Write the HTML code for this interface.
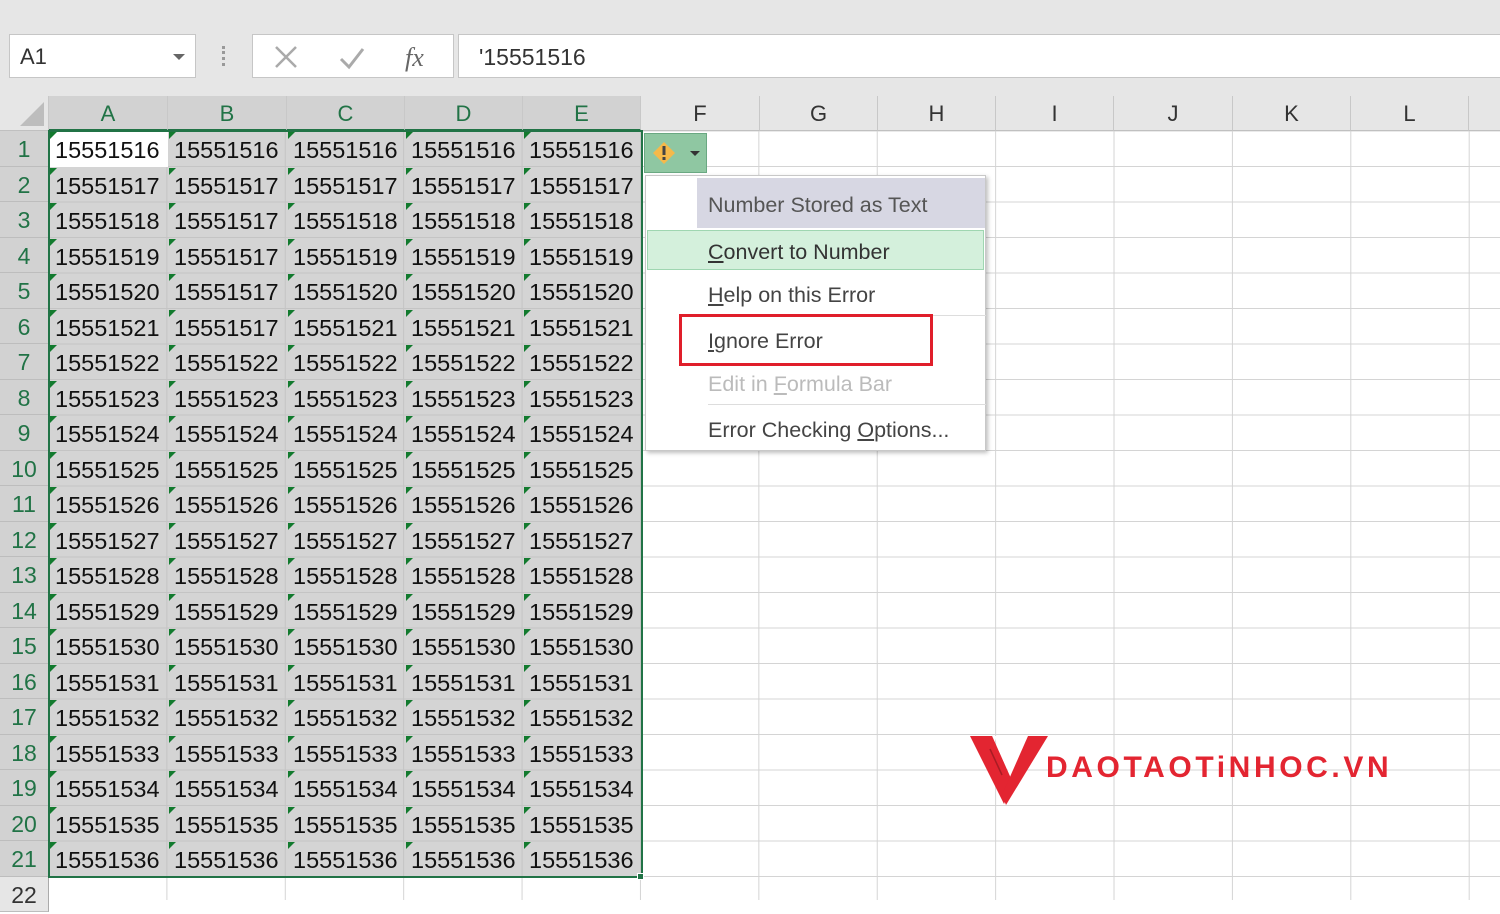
<!DOCTYPE html>
<html><head><meta charset="utf-8"><style>
*{margin:0;padding:0;box-sizing:border-box}
body{width:1500px;height:900px;overflow:hidden;background:#fff;font-family:"Liberation Sans",sans-serif;position:relative}
.top{position:absolute;left:0;top:0;width:1500px;height:96px;background:#e6e6e6}
.box{position:absolute;background:#fff;border:1px solid #c6c6c6}
.colh{position:absolute;top:96px;height:35px;background:#e6e6e6;border-right:1px solid #c8c8c8;border-bottom:1px solid #c0c0c0;text-align:center;font-size:22px;line-height:36px;color:#333}
.colh.s{background:#d2d2d2;color:#217346;border-bottom:2px solid #217346}
.rowh{position:absolute;left:0;width:49px;background:#d2d2d2;color:#217346;border-bottom:1px solid #bdbdbd;text-align:center;font-size:23px;line-height:37px;border-right:1px solid #aaa}
.grid{position:absolute;left:49px;top:131px;width:1451px;height:769px;
background-image:linear-gradient(to right,#d4d4d4 1px,transparent 1px),linear-gradient(to bottom,#d4d4d4 1px,transparent 1px);
background-size:118.4px 35.5px;background-position:-1px 35px}
.sel{position:absolute;left:49px;top:131px;width:592px;height:746px;background:#d4d4d4;
background-image:linear-gradient(to right,#c4c4c4 1px,transparent 1px),linear-gradient(to bottom,#c4c4c4 1px,transparent 1px);
background-size:118.4px 35.5px;background-position:-1px 35px}
.r{position:absolute;left:49px;height:35.5px;width:592px;font-size:23.5px;color:#111;line-height:39px}
.r span{position:absolute;top:0;padding-left:6px}
.r span:before{content:"";position:absolute;left:1px;top:1px;border-top:7px solid #127a2e;border-right:7px solid transparent}
.r span:nth-child(1){left:0}.r span:nth-child(2){left:119px}.r span:nth-child(3){left:238px}.r span:nth-child(4){left:356px}.r span:nth-child(5){left:474px}
.menu{position:absolute;left:645px;top:175px;width:341px;height:276px;background:#fff;border:1px solid #c8c8c8;box-shadow:2px 2px 4px rgba(0,0,0,.25)}
.mi{position:absolute;left:62px;font-size:21.5px;color:#444}
u{text-decoration:underline;text-underline-offset:2px}
</style></head><body>
<div class="top"></div>
<div class="box" style="left:9px;top:34px;width:187px;height:44px"><span style="position:absolute;left:10px;top:9px;font-size:22px;color:#333">A1</span><span style="position:absolute;left:163px;top:19px;border-top:6px solid #666;border-left:6px solid transparent;border-right:6px solid transparent"></span></div>
<div style="position:absolute;left:222px;top:46px;width:4px;height:20px;border-left:3px dotted #999"></div>
<div class="box" style="left:252px;top:34px;width:202px;height:44px">
<svg width="202" height="44" style="position:absolute;left:0;top:0"><path d="M23 12L43 32M43 12L23 32" stroke="#aaa" stroke-width="2.5"/><path d="M88 24l8 8 14-18" stroke="#aaa" stroke-width="3" fill="none"/><text x="152" y="31" font-family="Liberation Serif" font-style="italic" font-size="26" fill="#666">fx</text></svg></div>
<div class="box" style="left:458px;top:34px;width:1050px;height:44px"><span style="position:absolute;left:20px;top:9px;font-size:23px;color:#333">'15551516</span></div>

<div class="colh" style="left:0;width:49px;background:#e6e6e6"><span style="position:absolute;right:4px;bottom:4px;border-bottom:24px solid #bdbdbd;border-left:24px solid transparent"></span></div>
<div class="colh s" style="left:49px;width:119px">A</div>
<div class="colh s" style="left:168px;width:119px">B</div>
<div class="colh s" style="left:287px;width:118px">C</div>
<div class="colh s" style="left:405px;width:118px">D</div>
<div class="colh s" style="left:523px;width:118px">E</div>
<div class="colh" style="left:641px;width:119px">F</div>
<div class="colh" style="left:760px;width:118px">G</div>
<div class="colh" style="left:878px;width:118px">H</div>
<div class="colh" style="left:996px;width:118px">I</div>
<div class="colh" style="left:1114px;width:119px">J</div>
<div class="colh" style="left:1233px;width:118px">K</div>
<div class="colh" style="left:1351px;width:118px">L</div>
<div class="colh" style="left:1469px;width:40px"></div>

<div class="grid"></div>
<div class="sel"></div>
<div style="position:absolute;left:49px;top:131px;width:119px;height:36px;background:#fff"></div>

<div class="rowh" style="top:131px;height:35.5px">1</div>
<div class="rowh" style="top:166.5px;height:35.5px">2</div>
<div class="rowh" style="top:202px;height:35.5px">3</div>
<div class="rowh" style="top:237.5px;height:35.5px">4</div>
<div class="rowh" style="top:273px;height:35.5px">5</div>
<div class="rowh" style="top:308.5px;height:35.5px">6</div>
<div class="rowh" style="top:344px;height:35.5px">7</div>
<div class="rowh" style="top:379.5px;height:35.5px">8</div>
<div class="rowh" style="top:415px;height:35.5px">9</div>
<div class="rowh" style="top:450.5px;height:35.5px">10</div>
<div class="rowh" style="top:486px;height:35.5px">11</div>
<div class="rowh" style="top:521.5px;height:35.5px">12</div>
<div class="rowh" style="top:557px;height:35.5px">13</div>
<div class="rowh" style="top:592.5px;height:35.5px">14</div>
<div class="rowh" style="top:628px;height:35.5px">15</div>
<div class="rowh" style="top:663.5px;height:35.5px">16</div>
<div class="rowh" style="top:699px;height:35.5px">17</div>
<div class="rowh" style="top:734.5px;height:35.5px">18</div>
<div class="rowh" style="top:770px;height:35.5px">19</div>
<div class="rowh" style="top:805.5px;height:35.5px">20</div>
<div class="rowh" style="top:841px;height:36px">21</div>
<div class="rowh" style="top:877px;height:35px;background:#e6e6e6;color:#333">22</div>

<div class="r" style="top:131px"><span>15551516</span><span>15551516</span><span>15551516</span><span>15551516</span><span>15551516</span></div>
<div class="r" style="top:166.5px"><span>15551517</span><span>15551517</span><span>15551517</span><span>15551517</span><span>15551517</span></div>
<div class="r" style="top:202px"><span>15551518</span><span>15551517</span><span>15551518</span><span>15551518</span><span>15551518</span></div>
<div class="r" style="top:237.5px"><span>15551519</span><span>15551517</span><span>15551519</span><span>15551519</span><span>15551519</span></div>
<div class="r" style="top:273px"><span>15551520</span><span>15551517</span><span>15551520</span><span>15551520</span><span>15551520</span></div>
<div class="r" style="top:308.5px"><span>15551521</span><span>15551517</span><span>15551521</span><span>15551521</span><span>15551521</span></div>
<div class="r" style="top:344px"><span>15551522</span><span>15551522</span><span>15551522</span><span>15551522</span><span>15551522</span></div>
<div class="r" style="top:379.5px"><span>15551523</span><span>15551523</span><span>15551523</span><span>15551523</span><span>15551523</span></div>
<div class="r" style="top:415px"><span>15551524</span><span>15551524</span><span>15551524</span><span>15551524</span><span>15551524</span></div>
<div class="r" style="top:450.5px"><span>15551525</span><span>15551525</span><span>15551525</span><span>15551525</span><span>15551525</span></div>
<div class="r" style="top:486px"><span>15551526</span><span>15551526</span><span>15551526</span><span>15551526</span><span>15551526</span></div>
<div class="r" style="top:521.5px"><span>15551527</span><span>15551527</span><span>15551527</span><span>15551527</span><span>15551527</span></div>
<div class="r" style="top:557px"><span>15551528</span><span>15551528</span><span>15551528</span><span>15551528</span><span>15551528</span></div>
<div class="r" style="top:592.5px"><span>15551529</span><span>15551529</span><span>15551529</span><span>15551529</span><span>15551529</span></div>
<div class="r" style="top:628px"><span>15551530</span><span>15551530</span><span>15551530</span><span>15551530</span><span>15551530</span></div>
<div class="r" style="top:663.5px"><span>15551531</span><span>15551531</span><span>15551531</span><span>15551531</span><span>15551531</span></div>
<div class="r" style="top:699px"><span>15551532</span><span>15551532</span><span>15551532</span><span>15551532</span><span>15551532</span></div>
<div class="r" style="top:734.5px"><span>15551533</span><span>15551533</span><span>15551533</span><span>15551533</span><span>15551533</span></div>
<div class="r" style="top:770px"><span>15551534</span><span>15551534</span><span>15551534</span><span>15551534</span><span>15551534</span></div>
<div class="r" style="top:805.5px"><span>15551535</span><span>15551535</span><span>15551535</span><span>15551535</span><span>15551535</span></div>
<div class="r" style="top:841px"><span>15551536</span><span>15551536</span><span>15551536</span><span>15551536</span><span>15551536</span></div>

<div style="position:absolute;left:48px;top:130px;width:595px;height:748px;border:2px solid #217346"></div>
<div style="position:absolute;left:637px;top:873px;width:7px;height:7px;background:#217346;border:1px solid #fff"></div>

<div style="position:absolute;left:644px;top:133px;width:63px;height:40px;background:#8fc7a2;border:1px solid #6aa882">
<svg width="63" height="40" style="position:absolute;left:0;top:0"><path d="M19 8L30 19L19 30L8 19Z" fill="#f5b94a"/><rect x="17.5" y="12" width="3" height="9" fill="#444"/><rect x="17.5" y="23" width="3" height="3" fill="#444"/><path d="M45 17h10l-5 5z" fill="#333"/></svg></div>

<div class="menu">
<div style="position:absolute;left:51px;top:2px;width:288px;height:50px;background:#d7d7e3"></div>
<div class="mi" style="top:17px;color:#555">Number Stored as Text</div>
<div style="position:absolute;left:1px;top:54px;width:337px;height:40px;background:#d4f0dc;border:1px solid #9fd6b1"></div>
<div class="mi" style="top:64px;color:#333"><u>C</u>onvert to Number</div>
<div class="mi" style="top:107px"><u>H</u>elp on this Error</div>
<div style="position:absolute;left:62px;top:139px;width:278px;height:1px;background:#ddd"></div>
<div class="mi" style="top:153px"><u>I</u>gnore Error</div>
<div class="mi" style="top:196px;color:#bbb">Edit in <u>F</u>ormula Bar</div>
<div style="position:absolute;left:62px;top:228px;width:278px;height:1px;background:#ddd"></div>
<div class="mi" style="top:242px">Error Checking <u>O</u>ptions...</div>
</div>
<div style="position:absolute;left:679px;top:314px;width:254px;height:52px;border:3px solid #e01e2a"></div>

<svg width="90" height="80" style="position:absolute;left:968px;top:733px"><path d="M2 3H24L45 50L36 71Z" fill="#e32531"/><path d="M10 3H24L44 48L38 60Z" fill="#e32531"/><path d="M30 3L47 40L44 46L26 3Z" fill="#fff"/><path d="M60 3H80L38 72L34 62Z" fill="#e32531"/><path d="M22 16L34 42" stroke="#a81c24" stroke-width="1.5"/></svg>
<div style="position:absolute;left:1046px;top:750px;font-size:30px;font-weight:bold;color:#e32531;letter-spacing:3.6px;line-height:36px;white-space:nowrap">DAOTAOTiNHOC.VN</div>
</body></html>
